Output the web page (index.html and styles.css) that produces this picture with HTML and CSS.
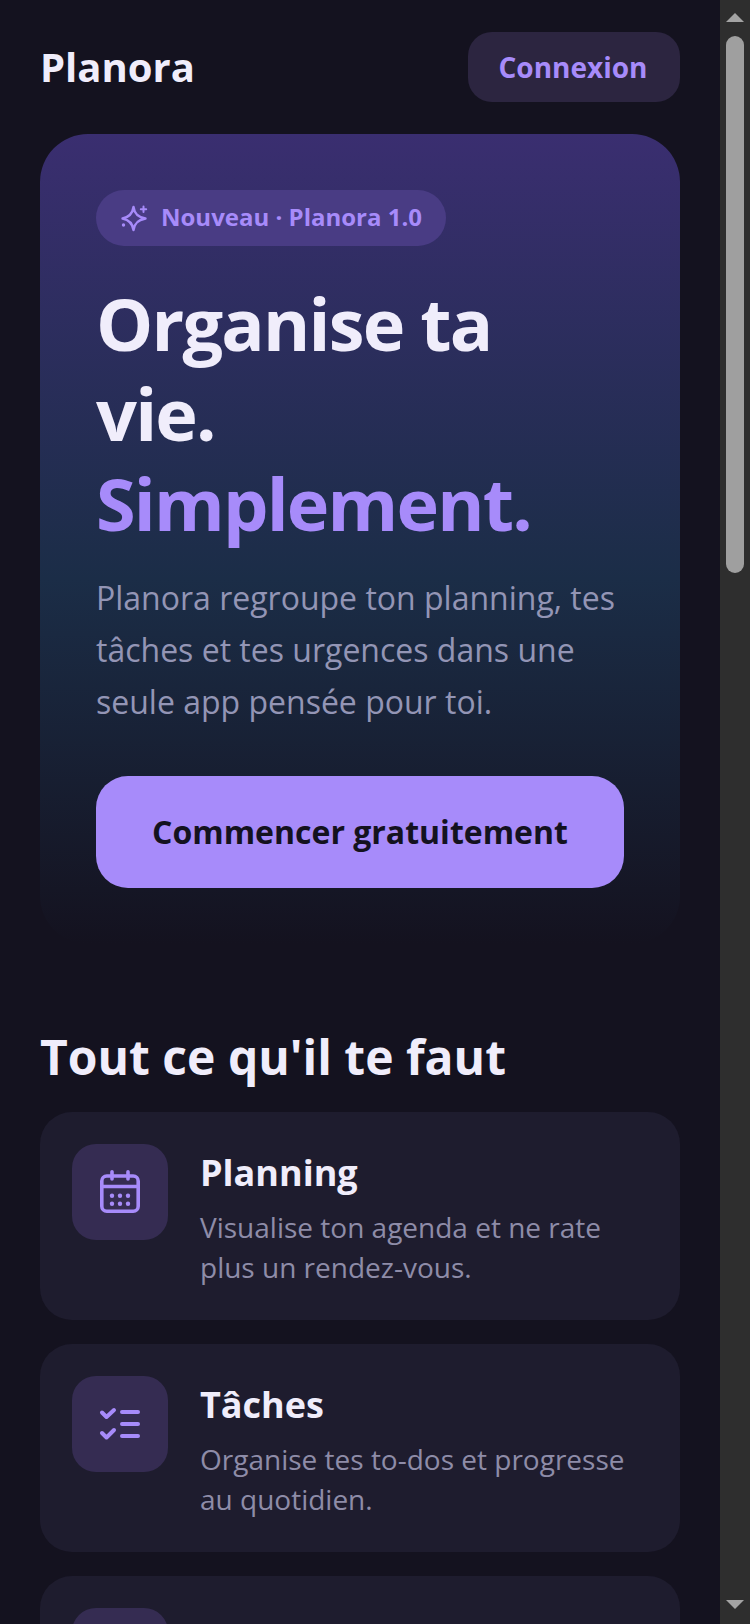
FILE: index.html
```html
<!DOCTYPE html>
<html lang="fr">
  <head>
    <meta charset="utf-8" />
    <title>Planora</title>
    <meta name="viewport" content="width=device-width, initial-scale=1.0" />
    <link rel="stylesheet" href="styles.css">
  </head>
  <body>
    <div class="page">
      <div class="inner">
        <header class="topbar">
          <div class="logo">Planora</div>
          <button class="login">Connexion</button>
        </header>

        <section class="hero">
          <div class="badge">
            <svg class="badge-icon" viewBox="0 0 28 28" fill="none" stroke="currentColor" stroke-width="2.4" stroke-linejoin="round" stroke-linecap="round">
              <path d="M13.5 3 C14.4 9.5 17.5 13 25.5 14.5 C17.5 16 14.4 19.5 13.5 26 C12.6 19.5 9.5 16 2.5 14.5 C9.5 13 12.6 9.5 13.5 3 Z" />
              <path d="M23.5 2.5 V8 M20.8 5.2 H26.2" stroke-width="2" />
              <circle cx="3.5" cy="21" r="1.7" fill="currentColor" stroke="none" />
            </svg>
            <span class="badge-text">Nouveau · Planora 1.0</span>
          </div>
          <h1>Organise ta vie.<br><span class="accent">Simplement.</span></h1>
          <p class="lead">Planora regroupe ton planning, tes tâches et tes urgences dans une seule app pensée pour toi.</p>
          <button class="cta">Commencer gratuitement</button>
        </section>

        <h2 class="section-title">Tout ce qu'il te faut</h2>

        <div class="cards">
          <div class="card">
            <div class="card-icon">
              <svg viewBox="0 0 48 48" fill="none" stroke="currentColor" stroke-width="3.6" stroke-linecap="round" stroke-linejoin="round">
                <rect x="5.8" y="8" width="36.4" height="35.2" rx="5" />
                <path d="M5.8 18.5 H42.2 M16 3.8 V11 M32 3.8 V11" />
                <g fill="currentColor" stroke="none">
                  <circle cx="16" cy="27.7" r="2.2" />
                  <circle cx="24" cy="27.7" r="2.2" />
                  <circle cx="32" cy="27.7" r="2.2" />
                  <circle cx="16" cy="35.7" r="2.2" />
                  <circle cx="24" cy="35.7" r="2.2" />
                  <circle cx="32" cy="35.7" r="2.2" />
                </g>
              </svg>
            </div>
            <div class="card-text">
              <h3>Planning</h3>
              <p>Visualise ton agenda et ne rate plus un rendez-vous.</p>
            </div>
          </div>

          <div class="card">
            <div class="card-icon">
              <svg viewBox="0 0 48 48" fill="none" stroke="currentColor" stroke-width="4" stroke-linecap="round" stroke-linejoin="round">
                <path d="M26 12 H42 M26 24 H42 M26 36 H42" />
                <path d="M6 12.5 L10.5 17 L18 10" />
                <path d="M6 33 L10.5 37.5 L18 30" />
              </svg>
            </div>
            <div class="card-text">
              <h3>Tâches</h3>
              <p>Organise tes to-dos et progresse au quotidien.</p>
            </div>
          </div>

          <div class="card">
            <div class="card-icon"></div>
          </div>
        </div>
      </div>
    </div>

    <div class="scrollbar">
      <svg class="arrow arrow-up" viewBox="0 0 18 9"><path d="M9 0 L18 9 H0 Z" /></svg>
      <div class="thumb"></div>
      <svg class="arrow arrow-down" viewBox="0 0 18 9"><path d="M0 0 H18 L9 9 Z" /></svg>
    </div>
  </body>
</html>
```

FILE: styles.css
```css
html,
body {
  margin: 0;
  height: 100%;
  overflow: hidden;
  background: #14121f;
}
body {
  display: flex;
  font-family: "Open Sans", "Noto Sans", sans-serif;
  color: #f0edfb;
}
.page {
  flex: 1;
  min-width: 0;
  height: 100vh;
  overflow: hidden;
}
.scrollbar {
  flex: none;
  display: flex;
  flex-direction: column;
  align-items: center;
  box-sizing: border-box;
  width: 30px;
  height: 100vh;
  padding: 13px 0 15px;
  background: #2e2e2e;
}
.arrow {
  flex: none;
  width: 18px;
  height: 9px;
  fill: #a3a3a3;
}
.thumb {
  flex: none;
  width: 18px;
  height: 537px;
  margin-top: 14px;
  border-radius: 9px;
  background: #9f9f9f;
}
.arrow-down {
  margin-top: auto;
}
.inner {
  box-sizing: border-box;
  padding: 32px 40px;
}
.topbar {
  display: flex;
  justify-content: space-between;
  align-items: center;
  margin-bottom: 32px;
}
.logo {
  font-size: 40px;
  font-weight: 700;
  line-height: 70px;
}
.login {
  height: 70px;
  width: 212px;
  padding: 0 2px 0 0;
  border: none;
  border-radius: 24px;
  background: #2c2540;
  color: #a78bfa;
  font-family: inherit;
  font-size: 28px;
  font-weight: 700;
}
.hero {
  box-sizing: border-box;
  padding: 56px;
  border-radius: 48px;
  background: linear-gradient(180deg, #3a2e70 0%, #1b2d47 55%, #14121f 100%);
}
.badge {
  display: inline-flex;
  align-items: center;
  gap: 13px;
  height: 56px;
  padding: 0 24px;
  border-radius: 28px;
  background: #493c84;
  color: #a78bfa;
  font-size: 24px;
  font-weight: 700;
}
.badge-text {
  padding-bottom: 4px;
}
.badge-icon {
  width: 28px;
  height: 28px;
}
h1 {
  margin: 32px 0 0;
  font-size: 72px;
  font-weight: 700;
  line-height: 90px;
  letter-spacing: -1.8px;
}
.accent {
  color: #a78bfa;
}
.lead {
  margin: 24px 0 0;
  font-size: 32px;
  line-height: 52px;
  color: #9395b5;
}
.cta {
  display: block;
  width: 100%;
  height: 112px;
  margin-top: 48px;
  padding: 0 0 2px;
  border: none;
  border-radius: 32px;
  background: #a78bfa;
  color: #14121f;
  font-family: inherit;
  font-size: 32px;
  font-weight: 700;
}
.section-title {
  margin: 80px 0 22px;
  font-size: 48px;
  font-weight: 700;
  line-height: 66px;
}
.cards {
  display: flex;
  flex-direction: column;
  gap: 24px;
}
.card {
  display: flex;
  gap: 32px;
  padding: 32px;
  border-radius: 32px;
  background: #1e1c2e;
}
.card-icon {
  flex: none;
  display: flex;
  align-items: center;
  justify-content: center;
  width: 96px;
  height: 96px;
  border-radius: 24px;
  background: #352c52;
  color: #a78bfa;
}
.card-icon svg {
  width: 48px;
  height: 48px;
}
.card-text {
  padding-top: 4px;
}
.card-text h3 {
  margin: 0 0 9px;
  font-size: 36px;
  font-weight: 700;
  line-height: 50px;
}
.card-text p {
  margin: 0 0 1px;
  font-size: 28px;
  line-height: 40px;
  color: #8e8ca8;
}
```
